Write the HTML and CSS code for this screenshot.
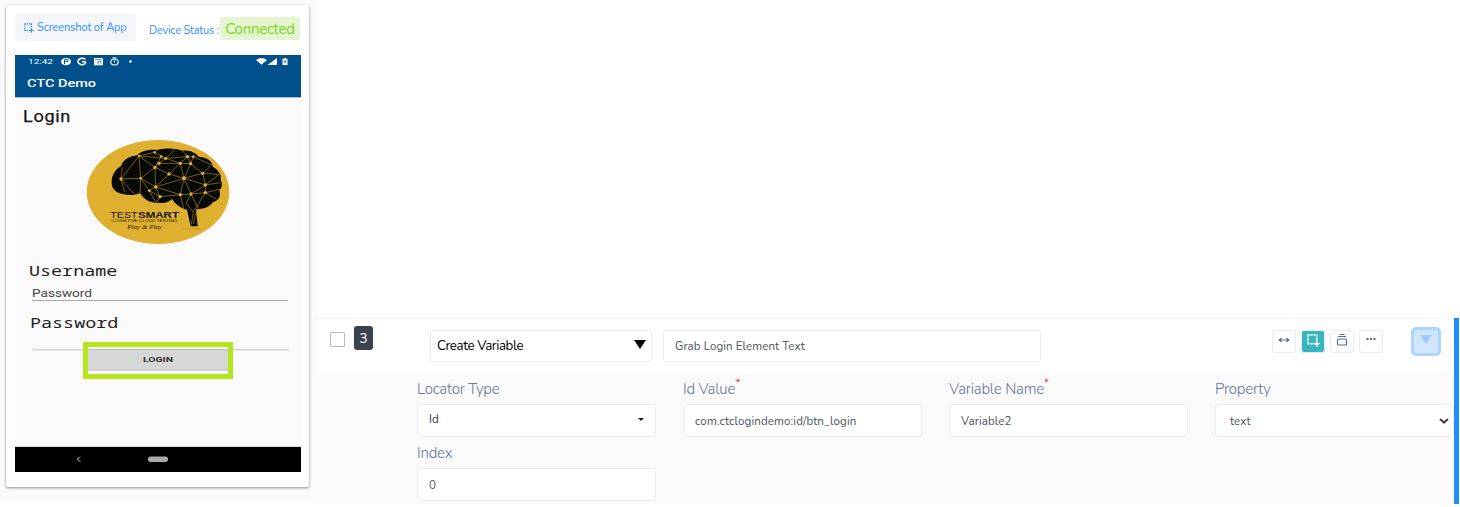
FILE: index.html
```html
<!DOCTYPE html>
<html lang="en">
<head>
<meta charset="utf-8">
<title>CTC Demo</title>
<link rel="stylesheet" href="styles.css">
</head>
<body>
<svg class="defs" width="0" height="0" aria-hidden="true">
  <symbol id="crop" viewBox="0 0 12 12">
    <path d="M1 .5v9M.5 1h9M9 .5v6M.5 9h6" fill="none" stroke="currentColor" stroke-width="1.4" stroke-dasharray="2 .7"/>
    <path d="M9 6.3v5.400M6.300 9h5.400" stroke="currentColor" stroke-width="1.400"/>
  </symbol>
</svg>
<div class="page">
  <aside class="device-panel">
    <div class="device-card">
      <div class="device-bar">
        <button class="shot-btn"><svg class="shot-icon"><use href="#crop"/></svg><span>Screenshot of App</span></button>
        <span class="status-label">Device Status :</span>
        <span class="status">Connected</span>
      </div>
      <svg class="phone" viewBox="0 0 286 417">
        <rect width="286" height="417" fill="#fafafa"/>
        <rect width="286" height="42" fill="#00508c"/>
        <rect y="42" width="286" height="1" fill="#a9bccb"/>
        <g class="roboto" fill="#fff">
          <text x="13" y="9.200" font-size="7.500" textLength="25" lengthAdjust="spacingAndGlyphs">12:42</text>
          <ellipse cx="51" cy="6.600" rx="5" ry="3.600"/>
          <path d="M49.500 9V4.700h3.200v2h-2.500" fill="none" stroke="#00508c"/>
          <path d="M70.500 4.400C67.500 2.200 63 3.700 63 6.600s5 4.200 7.300 1.900V6.800H67" fill="none" stroke="#fff" stroke-width="1.500"/>
          <rect x="79" y="3" width="9" height="7.300"/>
          <path d="M80 4.700h7M83 9.500V6.700h3v1.800" fill="none" stroke="#00508c" stroke-width=".7"/>
          <ellipse cx="99.500" cy="7" rx="3.700" ry="3" fill="none" stroke="#fff" stroke-width="1.100"/>
          <path d="M97.500 2.900h4M99.500 5v2.300" stroke="#fff" stroke-width="1"/>
          <circle cx="115.500" cy="6.500" r="1.300"/>
          <path d="M241 5q5.500-3.800 11 0l-5.500 4.800zM262 3v7h-9.500zM267.500 3.800h1.500V3h2v.8h1.500V10h-5z"/>
          <path d="M270 5v3.500M268.700 6.800h2.600" stroke="#00508c" stroke-width=".7"/>
          <text x="12" y="32" font-size="11.500" font-weight="500" textLength="69" lengthAdjust="spacingAndGlyphs">CTC Demo</text>
        </g>
        <text class="roboto" x="8" y="67" font-size="16.500" fill="#181818" stroke="#181818" stroke-width=".25" letter-spacing=".6" textLength="48" lengthAdjust="spacingAndGlyphs">Login</text>

        <g transform="translate(60 75) scale(.33333)">
          <ellipse cx="249" cy="186" rx="214" ry="156" fill="#dfb030"/>
          <path fill="#070907" d="M110 155C110 134 122 118 138 108C144 90 164 78 187 76C199 61 226 58 247 60C274 52 301 55 322 62C345 59 362 69 371 80C397 82 413 94 413 110C431 119 440 135 437 150C443 162 441 175 433 180C439 198 431 213 414 216C405 232 385 237 363 238L368 289H347L336 239C319 236 300 222 291 207C279 219 262 221 246 218C225 219 207 209 195 189C180 196 161 197 143 192C117 187 109 171 110 155Z"/>
          <path fill="none" stroke="#a88423" stroke-width="2" d="M138 147L192 78L197 145L138 147L178 193M138 147L150 188M192 78L240 112L197 145L242 171L282 132L240 112L259 79L239 67L192 78L272 85L316 100L327 145L282 132L316 100L337 80L355 80L347 101L383 130L410 105L355 80M337 80L347 101L316 100M252 100L272 85L337 80M240 112L252 100L316 100M383 130L327 145L347 101M383 130L432 133L391 165L327 145L242 171L223 182L197 145L195 189M391 165L383 130M391 165L436 158M391 165L391 188L348 192L327 145L316 194L242 171L255 200L223 182M316 194L348 192L391 165M255 200L316 194L327 240M348 192L333 220L355 246L391 188L424 208M348 192L370 236M242 171L240 112M391 188L435 178M355 246L349 284M365 240L355 282M223 182L242 216M255 200L244 218M272 85L300 58M138 147L142 112M337 80L322 62"/>
          <g fill="#dfb030">
            <circle cx="138" cy="147" r="5"/><circle cx="192" cy="78" r="4"/><circle cx="239" cy="67" r="4"/><circle cx="259" cy="79" r="4"/><circle cx="272" cy="85" r="5"/><circle cx="252" cy="100" r="5"/><circle cx="240" cy="112" r="5"/><circle cx="197" cy="145" r="4"/><circle cx="282" cy="132" r="5"/><circle cx="316" cy="100" r="5"/><circle cx="337" cy="80" r="5"/><circle cx="355" cy="80" r="4"/><circle cx="347" cy="101" r="5"/><circle cx="383" cy="130" r="5"/><circle cx="327" cy="145" r="6"/><circle cx="391" cy="165" r="5"/><circle cx="391" cy="188" r="5"/><circle cx="348" cy="192" r="5"/><circle cx="316" cy="194" r="5"/><circle cx="242" cy="171" r="5"/><circle cx="223" cy="182" r="4"/><circle cx="255" cy="200" r="5"/>
          </g>
          <path d="M322 296h58" stroke="#bf9729" stroke-width="2"/>
          <g class="arial" fill="#171307">
            <text x="106" y="263" font-size="27" textLength="82" lengthAdjust="spacingAndGlyphs">TEST</text>
            <text x="189" y="263" font-size="27" font-weight="700" textLength="123" lengthAdjust="spacingAndGlyphs">SMART</text>
            <text x="109" y="277" font-size="12" textLength="198" lengthAdjust="spacingAndGlyphs">COGNITIVE CLOUD TESTING</text>
            <text class="script" x="157" y="296" font-size="17" textLength="104" lengthAdjust="spacingAndGlyphs">Play &amp; Play</text>
          </g>
        </g>

        <g fill="#222">
          <text class="notomono" transform="translate(14 221) scale(1.27 1)" font-size="14.500">Username</text>
          <text class="roboto" x="17" y="241.500" font-size="10.500" fill="#444" textLength="60" lengthAdjust="spacingAndGlyphs">Password</text>
          <path d="M17 245.500h256" stroke="#aaa"/>
          <text class="notomono" transform="translate(15 273) scale(1.27 1)" font-size="14.500">Password</text>
        </g>
        <path d="M18 294.800h256" stroke="#ccc" stroke-width="1.300"/>
        <rect x="73" y="292" width="140" height="28" fill="#fafafa"/>
        <rect x="73" y="294" width="140" height="22" fill="#bbb"/>
        <rect x="73" y="295" width="140" height="19.500" fill="#d6d7d7"/>
        <text class="roboto" x="128" y="307.300" font-size="7.500" font-weight="700" fill="#333" textLength="30" lengthAdjust="spacingAndGlyphs">LOGIN</text>
        <rect x="73" y="315.500" width="140" height="4" fill="#fafafa"/>
        <rect x="70.500" y="289.500" width="145" height="32" fill="none" stroke="#b5e61d" stroke-width="5"/>
        <path d="M0 391.500h286" stroke="#ddd"/>
        <rect y="392" width="286" height="25" fill="#000"/>
        <path d="M65.500 402l-3.500 2.300 3.500 2.300" fill="none" stroke="#aaa"/>
        <rect x="133" y="401.500" width="20" height="5.500" rx="2.700" fill="#aaa"/>
      </svg>
    </div>
  </aside>

  <main class="step">
    <div class="step-content">
      <div class="step-head">
        <span class="checkbox"></span>
        <span class="step-number">3</span>
        <div class="control action"><span>Create Variable</span><svg width="12" height="9"><path d="M0 0h12L6 9z" fill="#000"/></svg></div>
        <div class="control title"><span>Grab Login Element Text</span></div>
        <div class="tools">
          <button class="tool"><svg width="12" height="8" viewBox="0 0 12 8"><path d="M1 4h10M3.500 2L1.200 4l2.300 2M8.500 2l2.300 2-2.300 2" fill="none" stroke="currentColor" stroke-width="1.200"/></svg></button>
          <button class="tool active"><svg width="13" height="13"><use href="#crop"/></svg></button>
          <button class="tool"><svg width="12" height="12" viewBox="0 0 12 12"><path d="M3.500 .5h5M2 2.500h8" fill="none" stroke="currentColor"/><rect x="1.500" y="5" width="9" height="6" rx="1" fill="none" stroke="currentColor" stroke-width="1.200"/></svg></button>
          <button class="tool"><svg width="10" height="3"><path d="M.5 0h2v2h-2zM4 0h2v2H4zM7.500 0h2v2h-2z" fill="currentColor"/></svg></button>
        </div>
        <button class="expand"><svg width="12" height="9"><path d="M0 0h12L6 9z" fill="currentColor"/></svg></button>
      </div>
      <div class="fields">
        <div class="field"><label><span>Locator Type</span></label><div class="control locator"><span>Id</span><svg width="6" height="3"><path d="M0 0h6L3 3z" fill="#222"/></svg></div></div>
        <div class="field"><label><span>Id Value</span><sup>*</sup></label><div class="control"><span>com.ctclogindemo:id/btn_login</span></div></div>
        <div class="field"><label><span>Variable Name</span><sup>*</sup></label><div class="control"><span>Variable2</span></div></div>
        <div class="field"><label><span>Property</span></label><div class="control property"><span>text</span><svg width="10" height="6"><path d="M1 1l4 3.600L9 1" fill="none" stroke="#444" stroke-width="2"/></svg></div></div>
        <div class="field"><label><span>Index</span></label><div class="control"><span>0</span></div></div>
      </div>
    </div>
  </main>
</div>
</body>
</html>
```
FILE: styles.css
```css
* { box-sizing: border-box; }
body { margin: 0; background: #fff; font-family: Nunito, Lato, sans-serif; overflow: hidden; }
button { font: inherit; border: 0; padding: 0; margin: 0; }
svg { display: block; flex: none; }
.defs { position: absolute; }
.page { display: flex; width: 1460px; height: 507px; }
.device-panel { width: 318px; height: 502px; padding: 5px 9px 15px 6px; background: #fafafa; }
.device-card { width: 303px; height: 482px; padding: 9px 8px 0 9px; background: #fff; border-radius: 2px; box-shadow: 0 1px 3px rgba(0,0,0,.45); }
.device-bar { display: flex; height: 41px; align-items: flex-start; white-space: nowrap; }
.shot-btn { display: flex; align-items: center; gap: 3px; width: 121px; height: 27px; padding-left: 9px; border-radius: 3px; background: #f4f5f8; color: #3390ff; font-size: 11px; letter-spacing: -.1px; }
.shot-icon { width: 10px; height: 10px; }
.status-label { width: 71px; margin: 9px 0 0 13px; color: #3390ff; font-size: 11px; line-height: 15px; letter-spacing: -.2px; }
.status { width: 80px; height: 23px; margin-top: 3px; border-radius: 3px; background: #e4f5cf; color: #7ed321; font-size: 15px; line-height: 24px; text-align: center; letter-spacing: -.25px; }
.phone { width: 286px; height: 417px; }
.roboto { font-family: Roboto, sans-serif; }
.notomono { font-family: "Noto Sans Mono", "Noto Sans Mono CJK SC", "Noto Sans", sans-serif; }
.arial { font-family: "Liberation Sans", sans-serif; }
.script { font-family: "Liberation Serif", serif; font-style: italic; }
.step { width: 1142px; padding-top: 318px; }
.step-content { position: relative; width: 1141px; height: 186px; border: solid #f5f5f5; border-width: 1px 0 0; background: #fafafa; padding-right: 5px; }
.step-content::after { content: ""; position: absolute; top: -1px; right: 0; bottom: 0; width: 5px; background: #1f8ff7; }
.step-head { display: flex; align-items: flex-start; height: 54px; background: #fff; }
.checkbox { width: 15px; height: 15px; margin: 13px 0 0 12px; border: 1px solid #bbb; border-radius: 1px; }
.step-number { width: 19px; height: 24px; margin: 7px 0 0 9px; border-radius: 3px; background: #3b4351; color: #fff; font-size: 14px; line-height: 25px; text-align: center; }
.control { display: flex; align-items: center; width: 239px; height: 33px; padding: 0 11px; border: 1px solid #ececee; border-radius: 3px; background: #fff; color: #495057; font-size: 11.500px; letter-spacing: .15px; white-space: nowrap; }
.action { width: 222px; height: 32px; margin: 11px 0 0 57px; padding: 0 6px; justify-content: space-between; color: #000; font-size: 13.330px; letter-spacing: -.4px; }
.action svg { margin: -3px -1px 0 0; }
.title { width: 378px; height: 32px; margin: 11px 0 0 11px; padding-bottom: 1px; letter-spacing: .1px; }
.tools { display: flex; gap: 5px; margin: 11px 0 0 231px; }
.tool { display: flex; align-items: center; justify-content: center; width: 24px; height: 23px; padding-bottom: 4px; border: 1px solid #ececee; border-radius: 3px; background: #fff; color: #5a6a8f; }
.tool.active { background: #39b5bd; border: 1px solid #d8f1f2; color: #fff; padding: 0 0 3px 1px; }
.expand { display: flex; align-items: center; justify-content: center; width: 30px; height: 29px; margin: 8px 0 0 28px; padding-bottom: 4px; border: 3px solid #add3ff; border-radius: 5px; background: #d0e7ff; color: #9fcaff; }
.fields { display: grid; grid-template-columns: repeat(4, 239px); column-gap: 27px; margin-left: 99px; width: 1037px; overflow: hidden; }
.field { height: 64px; }
.field label { display: flex; height: 31px; color: #64749a; font-size: 15px; font-weight: 350; line-height: 32px; letter-spacing: -.2px; }
.field sup { font-size: 12px; line-height: 21px; color: #e8344c; }
.locator { justify-content: space-between; padding-bottom: 3px; color: #333; }
.property { justify-content: space-between; padding: 0 4px 0 14px; }
```
